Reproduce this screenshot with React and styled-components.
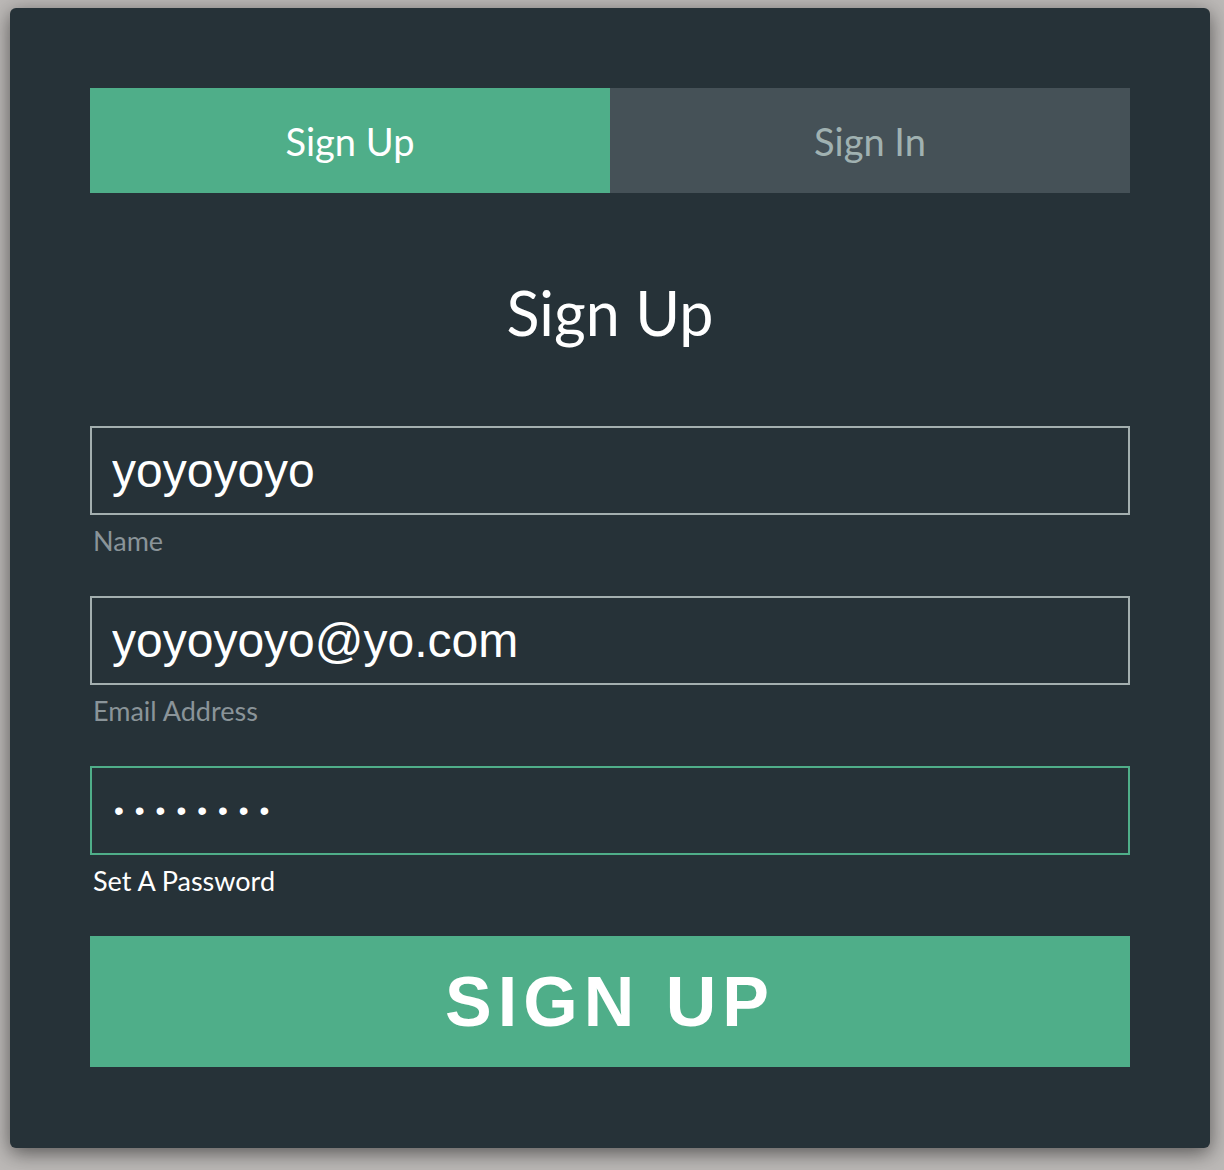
import React, { useState } from "react";
import styled, { createGlobalStyle } from "styled-components";

const GlobalStyle = createGlobalStyle`
  html, body {
    margin: 0;
    padding: 0;
    background: #bcb9b7;
  }
  * {
    box-sizing: border-box;
  }
`;

const Page = styled.div`
  padding: 8px 14px 22px 10px;
`;

const Card = styled.div`
  width: 1200px;
  display: flex;
  flex-direction: column;
  padding: 80px 80px 81px;
  background-color: #263238;
  border-radius: 6px;
  box-shadow: 0 5px 20px rgba(20, 20, 20, 0.6);
  font-family: Lato, "Open Sans", sans-serif;
`;

const Tabs = styled.div`
  display: flex;
  height: 105px;
`;

const Tab = styled.button`
  flex: 1;
  border: none;
  margin: 0;
  padding: 0;
  font-family: inherit;
  font-size: 38px;
  cursor: pointer;
  background: ${(p) => (p.$active ? "#4fae89" : "#455157")};
  color: ${(p) => (p.$active ? "#ffffff" : "#a0b1b1")};
`;

const Heading = styled.h1`
  margin: 84px 0 77px;
  height: 72px;
  line-height: 72px;
  text-align: center;
  font-size: 61px;
  font-weight: 400;
  color: #ffffff;
`;

const Field = styled.div`
  display: flex;
  flex-direction: column;
  margin-bottom: 39px;
`;

const Input = styled.input`
  width: 100%;
  height: 89px;
  padding: 0 20px;
  background: transparent;
  border: 2px solid ${(p) => (p.$focused ? "#4fae89" : "#a3afaf")};
  outline: none;
  color: #ffffff;
  font-family: "Liberation Sans", Arial, sans-serif;
  font-size: 48px;

  &[type="password"] {
    padding-left: 22px;
    font-size: 28px;
    letter-spacing: 11px;
  }
`;

const Label = styled.label`
  margin-top: 10px;
  padding-left: 3px;
  height: 32px;
  line-height: 32px;
  font-size: 27px;
  color: ${(p) => (p.$focused ? "#ffffff" : "#8a9499")};
`;

const Submit = styled.button`
  height: 131px;
  border: none;
  background: #4fae89;
  color: #ffffff;
  font-family: "Liberation Sans", Arial, sans-serif;
  font-weight: 700;
  font-size: 70px;
  letter-spacing: 6px;
  cursor: pointer;
`;

const fields = [
  { id: "name", label: "Name", type: "text", value: "yoyoyoyo" },
  { id: "email", label: "Email Address", type: "email", value: "yoyoyoyo@yo.com" },
  { id: "password", label: "Set A Password", type: "password", value: "yoyoyoyo", focused: true },
];

export default function App() {
  const [active, setActive] = useState("signup");

  return (
    <Page>
      <GlobalStyle />
      <Card>
        <Tabs>
          <Tab $active={active === "signup"} onClick={() => setActive("signup")}>
            Sign Up
          </Tab>
          <Tab $active={active === "signin"} onClick={() => setActive("signin")}>
            Sign In
          </Tab>
        </Tabs>
        <Heading>Sign Up</Heading>
        {fields.map((f) => (
          <Field key={f.id}>
            <Input id={f.id} type={f.type} defaultValue={f.value} $focused={f.focused} />
            <Label htmlFor={f.id} $focused={f.focused}>
              {f.label}
            </Label>
          </Field>
        ))}
        <Submit>SIGN UP</Submit>
      </Card>
    </Page>
  );
}
